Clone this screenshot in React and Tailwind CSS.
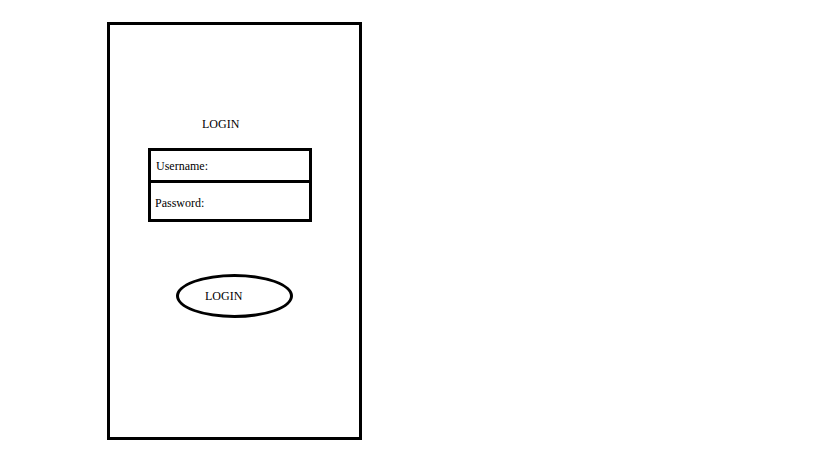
export default function App() {
  return (
    <div className="min-h-[460px] w-[819px] bg-white font-['Liberation_Serif',serif] text-[12px] text-black">
      <div className="ml-[107px] pt-[22px]">
        <div className="flex h-[418px] w-[255px] flex-col border-[3px] border-black">
          <div className="ml-[92px] mt-[92px] leading-[14px]">LOGIN</div>

          <div className="ml-[38px] mt-[17px] flex w-[164px] flex-col border-[3px] border-black">
            <div className="flex h-[29px] items-center pl-[5px] pt-[1px]">Username:</div>
            <div className="flex h-[39px] items-center border-t-[3px] border-black pl-[4px] pt-[3px]">Password:</div>
          </div>

          <div className="ml-[66px] mt-[52px] flex h-[44px] w-[117px] items-center rounded-[50%] border-[3px] border-black pl-[26px]">
            LOGIN
          </div>
        </div>
      </div>
    </div>
  );
}
